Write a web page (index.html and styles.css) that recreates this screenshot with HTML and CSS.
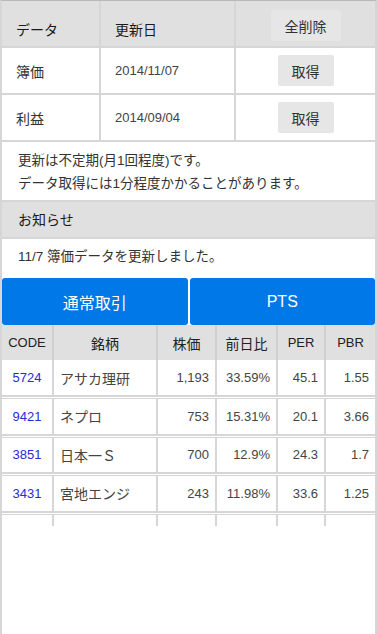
FILE: index.html
```html
<!DOCTYPE html>
<html>
  <head>
    <meta charset="UTF-8">
    <title>データ</title>
    <link rel="stylesheet" href="styles.css">
  </head>
  <body>
    <div class="page">
      <table class="data-table">
        <colgroup>
          <col class="col-name">
          <col class="col-date">
          <col>
        </colgroup>
        <thead>
          <tr>
            <th>データ</th>
            <th>更新日</th>
            <th class="action"><button class="btn">全削除</button></th>
          </tr>
        </thead>
        <tbody>
          <tr>
            <td>簿価</td>
            <td class="num">2014/11/07</td>
            <td class="action"><button class="btn">取得</button></td>
          </tr>
          <tr>
            <td>利益</td>
            <td class="num">2014/09/04</td>
            <td class="action"><button class="btn">取得</button></td>
          </tr>
        </tbody>
      </table>

      <div class="note">
        更新は不定期(月1回程度)です。<br>
        データ取得には1分程度かかることがあります。
      </div>
      <div class="section-head">お知らせ</div>
      <div class="news">11/7 簿価データを更新しました。</div>

      <div class="tabs">
        <button class="tab">通常取引</button>
        <button class="tab">PTS</button>
      </div>

      <table class="stock-table stock-head">
        <colgroup>
          <col class="c-code"><col class="c-name"><col class="c-price"><col class="c-diff"><col class="c-per"><col>
        </colgroup>
        <tr>
          <th>CODE</th><th>銘柄</th><th>株価</th><th>前日比</th><th>PER</th><th>PBR</th>
        </tr>
      </table>
      <div class="stock-list">
        <table class="stock-table">
          <colgroup>
            <col class="c-code"><col class="c-name"><col class="c-price"><col class="c-diff"><col class="c-per"><col>
          </colgroup>
          <tr>
            <td class="code"><a href="#">5724</a></td><td class="name">アサカ理研</td>
            <td class="num">1,193</td><td class="num">33.59%</td><td class="num">45.1</td><td class="num">1.55</td>
          </tr>
        </table>
        <table class="stock-table">
          <colgroup>
            <col class="c-code"><col class="c-name"><col class="c-price"><col class="c-diff"><col class="c-per"><col>
          </colgroup>
          <tr>
            <td class="code"><a href="#">9421</a></td><td class="name">ネプロ</td>
            <td class="num">753</td><td class="num">15.31%</td><td class="num">20.1</td><td class="num">3.66</td>
          </tr>
        </table>
        <table class="stock-table">
          <colgroup>
            <col class="c-code"><col class="c-name"><col class="c-price"><col class="c-diff"><col class="c-per"><col>
          </colgroup>
          <tr>
            <td class="code"><a href="#">3851</a></td><td class="name">日本一Ｓ</td>
            <td class="num">700</td><td class="num">12.9%</td><td class="num">24.3</td><td class="num">1.7</td>
          </tr>
        </table>
        <table class="stock-table">
          <colgroup>
            <col class="c-code"><col class="c-name"><col class="c-price"><col class="c-diff"><col class="c-per"><col>
          </colgroup>
          <tr>
            <td class="code"><a href="#">3431</a></td><td class="name">宮地エンジ</td>
            <td class="num">243</td><td class="num">11.98%</td><td class="num">33.6</td><td class="num">1.25</td>
          </tr>
        </table>
        <table class="stock-table">
          <colgroup>
            <col class="c-code"><col class="c-name"><col class="c-price"><col class="c-diff"><col class="c-per"><col>
          </colgroup>
          <tr>
            <td class="code"><a href="#">2763</a></td><td class="name">エフティ資</td>
            <td class="num">412</td><td class="num">10.75%</td><td class="num">14.2</td><td class="num">1.08</td>
          </tr>
        </table>
      </div>
    </div>
  </body>
</html>
```

FILE: styles.css
```css
*{
  box-sizing: border-box;
}
html, body{
  margin: 0;
  padding: 0;
  height: 100%;
}
body{
  font-family: "Liberation Sans", "Noto Sans CJK JP", sans-serif;
  font-size: 14px;
  color: #333;
  background: #fff;
}
.page{
  min-height: 100%;
  border-left: 2px solid #d6d6d6;
  border-right: 2px solid #d6d6d6;
  border-top: 1px solid #b8b8b8;
}

/* data table */
.data-table{
  width: 100%;
  border-collapse: collapse;
  table-layout: fixed;
}
.data-table .col-name{
  width: 98px;
}
.data-table .col-date{
  width: 135px;
}
.data-table th,
.data-table td{
  border: 2px solid #d6d6d6;
  text-align: left;
  padding: 0 14px;
  font-weight: normal;
}
.data-table tr > :first-child{
  border-left: 0;
}
.data-table tr > :last-child{
  border-right: 0;
}
.data-table thead tr > *{
  border-top: 0;
}
.data-table th{
  background: #e0e0e0;
  color: #1a1a1a;
  height: 46px;
  padding-top: 11px;
}
.data-table td{
  height: 47px;
}
.data-table .num{
  font-size: 13px;
  color: #444;
}
.data-table th.action{
  vertical-align: top;
  padding-top: 9px;
}
.data-table .action{
  text-align: center;
  padding: 0;
}
.btn{
  font-family: inherit;
  font-size: 14px;
  color: #333;
  background: #e6e6e6;
  border: 0;
  border-radius: 2px;
  padding: 0 14px;
  height: 31px;
}

/* notes */
.note{
  padding: 7px 16px 5px;
  line-height: 23px;
  font-size: 13.5px;
  border-bottom: 2px solid #d6d6d6;
}
.section-head{
  background: #e0e0e0;
  color: #1a1a1a;
  height: 37px;
  line-height: 37px;
  padding: 0 16px;
  border-bottom: 2px solid #d6d6d6;
}
.news{
  height: 37px;
  line-height: 36px;
  padding: 0 16px;
  font-size: 13.5px;
}

/* tabs */
.tabs{
  display: flex;
  gap: 2px;
  margin-top: 2px;
}
.tab{
  flex: 1;
  height: 47px;
  border: 0;
  border-radius: 3px;
  background: #0078e7;
  color: #fff;
  font-family: inherit;
  font-size: 16px;
}

/* stock table */
.stock-table{
  width: 100%;
  border-collapse: collapse;
  table-layout: fixed;
}
.stock-table .c-code{ width: 51px; }
.stock-table .c-name{ width: 104px; }
.stock-table .c-price{ width: 59px; }
.stock-table .c-diff{ width: 61px; }
.stock-table .c-per{ width: 48px; }
.stock-table th,
.stock-table td{
  border-left: 2px solid #d6d6d6;
  padding: 0 6px;
  white-space: nowrap;
  overflow: hidden;
}
.stock-table tr > :first-child{
  border-left: 0;
}
.stock-head th{
  background: #e0e0e0;
  color: #222;
  font-weight: normal;
  height: 35px;
  text-align: center;
  border-left-color: #d0d0d0;
}
.stock-head th:first-child{
  font-size: 13px;
  padding: 0;
}
.stock-head th:nth-child(5),
.stock-head th:nth-child(6){
  font-size: 13px;
}
.stock-list{
  height: 166px;
  overflow: hidden;
}
.stock-list .stock-table{
  border-top: 1px solid #d6d6d6;
  border-bottom: 2px solid #d6d6d6;
  margin-bottom: 1px;
}
.stock-list .stock-table:first-child{
  border-top: 0;
}
.stock-list td{
  height: 36px;
  font-size: 13px;
}
.stock-list .code{
  text-align: center;
  padding: 0;
}
.stock-list .code a{
  color: #2a2ad8;
  text-decoration: none;
}
.stock-list .name{
  font-size: 14px;
  color: #444;
}
.stock-list .num{
  text-align: right;
  color: #444;
}
```
